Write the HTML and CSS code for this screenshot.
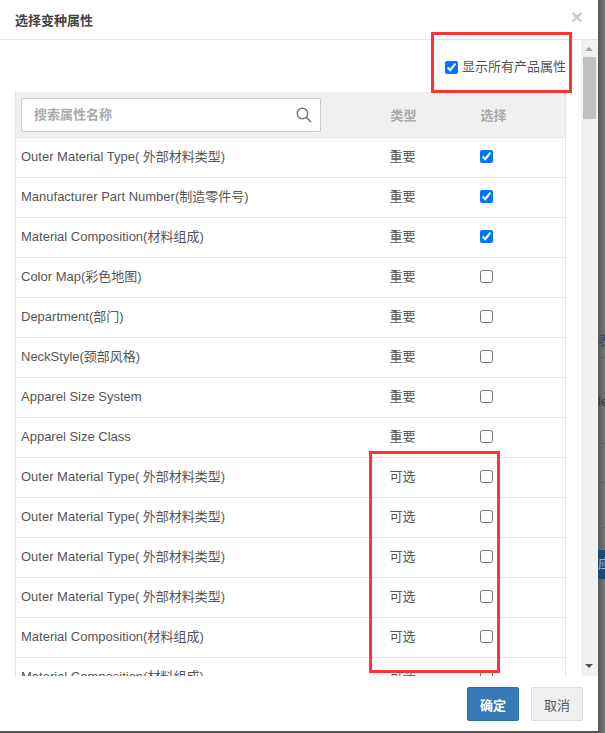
FILE: index.html
```html
<!DOCTYPE html>
<html lang="zh-CN">
<head>
    <meta charset="UTF-8">
    <title>选择变种属性</title>
    <link rel="stylesheet" href="styles.css">
</head>
<body>
    <div class="backdrop">
        <span class="bg-text bg-text-a">表</span>
        <span class="bg-text bg-text-b">le</span>
        <span class="bg-line bg-line-a"></span>
        <span class="bg-line bg-line-b"></span>
        <span class="bg-line bg-line-c"></span>
        <span class="bg-line bg-line-d"></span>
        <span class="bg-band"><span class="bg-band-text">应</span></span>
    </div>
    <div class="modal">
        <div class="modal-header">
            <h4 class="modal-title">选择变种属性</h4>
            <span class="close">×</span>
        </div>
        <div class="modal-body">
            <div class="scroll-content">
                <div class="show-all">
                    <input type="checkbox" checked>
                    <span>显示所有产品属性</span>
                </div>
                <table class="attr-table">
                    <thead>
                        <tr>
                            <th class="col-name">
                                <div class="search">
                                    <input type="text" placeholder="搜索属性名称">
                                    <svg width="18" height="18" viewBox="0 0 18 18" fill="none" stroke="#777" stroke-width="1.5">
                                        <circle cx="7.5" cy="7.5" r="5.2"/>
                                        <path d="M11.4 11.4 L16 16"/>
                                    </svg>
                                </div>
                            </th>
                            <th class="col-type">类型</th>
                            <th class="col-check">选择</th>
                        </tr>
                    </thead>
                    <tbody>
                        <tr><td>Outer Material Type( 外部材料类型)</td><td>重要</td><td><input type="checkbox" checked></td></tr>
                        <tr><td>Manufacturer Part Number(制造零件号)</td><td>重要</td><td><input type="checkbox" checked></td></tr>
                        <tr><td>Material Composition(材料组成)</td><td>重要</td><td><input type="checkbox" checked></td></tr>
                        <tr><td>Color Map(彩色地图)</td><td>重要</td><td><input type="checkbox"></td></tr>
                        <tr><td>Department(部门)</td><td>重要</td><td><input type="checkbox"></td></tr>
                        <tr><td>NeckStyle(颈部风格)</td><td>重要</td><td><input type="checkbox"></td></tr>
                        <tr><td>Apparel Size System</td><td>重要</td><td><input type="checkbox"></td></tr>
                        <tr><td>Apparel Size Class</td><td>重要</td><td><input type="checkbox"></td></tr>
                        <tr><td>Outer Material Type( 外部材料类型)</td><td>可选</td><td><input type="checkbox"></td></tr>
                        <tr><td>Outer Material Type( 外部材料类型)</td><td>可选</td><td><input type="checkbox"></td></tr>
                        <tr><td>Outer Material Type( 外部材料类型)</td><td>可选</td><td><input type="checkbox"></td></tr>
                        <tr><td>Outer Material Type( 外部材料类型)</td><td>可选</td><td><input type="checkbox"></td></tr>
                        <tr><td>Material Composition(材料组成)</td><td>可选</td><td><input type="checkbox"></td></tr>
                        <tr><td>Material Composition(材料组成)</td><td>可选</td><td><input type="checkbox"></td></tr>
                    </tbody>
                </table>
            </div>
            <div class="scrollbar">
                <span class="arrow arrow-up"></span>
                <div class="thumb"></div>
                <span class="arrow arrow-down"></span>
            </div>
        </div>
        <div class="modal-footer">
            <button class="btn btn-primary">确定</button>
            <button class="btn btn-default">取消</button>
        </div>
    </div>
    <div class="mark mark-top"></div>
    <div class="mark mark-list"></div>
</body>
</html>
```

FILE: styles.css
```css
* {
    box-sizing: border-box;
}

html, body {
    margin: 0;
    height: 733px;
    overflow: hidden;
}

body {
    position: relative;
    background: #555;
    font-family: "Liberation Sans", "Noto Sans CJK SC", sans-serif;
    font-size: 13px;
    color: #555;
}

.backdrop {
    position: absolute;
    top: 0;
    right: 0;
    bottom: 0;
    width: 7px;
    background: linear-gradient(to right, #585858, #767676);
    overflow: hidden;
}

.bg-text {
    position: absolute;
    left: 0;
    font-size: 13px;
    color: #333;
}

.bg-text-a {
    top: 330px;
    color: #2c4a6b;
}

.bg-text-b {
    top: 394px;
}

.bg-line {
    position: absolute;
    left: 0;
    right: 0;
    height: 1px;
    background: #5f5f5f;
}

.bg-line-a {
    top: 357px;
}

.bg-line-b {
    top: 443px;
}

.bg-line-c {
    top: 482px;
}

.bg-line-d {
    top: 527px;
}

.bg-band {
    position: absolute;
    left: 0;
    right: 0;
    top: 550px;
    height: 29px;
    background: #1f4a70;
}

.bg-band-text {
    color: #9db6cc;
    font-size: 13px;
    line-height: 28px;
}

.modal {
    position: relative;
    width: 598px;
    height: 731px;
    background: #fff;
    display: flex;
    flex-direction: column;
}

.modal-header {
    height: 40px;
    flex: none;
    padding: 0 15px;
    display: flex;
    align-items: center;
    justify-content: space-between;
    border-bottom: 1px solid #e5e5e5;
}

.modal-title {
    margin: 0;
    font-size: 13px;
    font-weight: 700;
    color: #444;
}

.close {
    font-size: 21px;
    font-weight: 700;
    line-height: 1;
    color: #ccc;
    margin: -6px 0 0 0;
}

.modal-body {
    height: 636px;
    flex: none;
    display: flex;
    overflow: hidden;
}

.scroll-content {
    flex: 1;
    min-width: 0;
    padding: 0 15px;
    overflow: hidden;
}

.show-all {
    height: 52px;
    padding-top: 2px;
    display: flex;
    align-items: center;
    justify-content: flex-end;
    gap: 4px;
    line-height: 14px;
}

.show-all input {
    margin: 0;
}

.attr-table {
    width: 551px;
    table-layout: fixed;
    border-collapse: collapse;
    border-left: 1px solid #e5e5e5;
    border-right: 1px solid #e5e5e5;
}

.attr-table th {
    height: 45px;
    background: #f0f0f0;
    color: #aaa;
    font-weight: 700;
    text-align: left;
    padding: 1px 0 0;
    border-bottom: 1px solid #e5e5e5;
}

.attr-table .col-type,
.attr-table .col-check {
    padding: 0 0 0 1px;
}

.attr-table td {
    height: 40px;
    padding: 0 0 1px;
    line-height: 20px;
    border-bottom: 1px solid #e5e5e5;
}

.attr-table td:first-child {
    padding-left: 5px;
}

.attr-table td:last-child {
    padding-bottom: 2px;
}

.col-name {
    width: 374px;
}

.col-type {
    width: 90px;
}

.attr-table input[type="checkbox"] {
    margin: 0;
    display: block;
}

.search {
    position: relative;
    margin-left: 5px;
    width: 300px;
    height: 34px;
}

.search input {
    width: 100%;
    height: 100%;
    border: 1px solid #ccc;
    border-radius: 2px;
    padding: 0 30px 0 12px;
    font-family: inherit;
    font-size: 13px;
    font-weight: 700;
    background: #fff;
}

.search input::placeholder {
    color: #aaa;
}

.search svg {
    position: absolute;
    right: 8px;
    top: 8px;
}

.attr-table input[type="checkbox"],
.show-all input {
    width: 13px;
    height: 13px;
}

.scrollbar {
    width: 17px;
    background: #f1f1f1;
    position: relative;
    flex: none;
}

.arrow {
    position: absolute;
    left: 4px;
    width: 0;
    height: 0;
    border-left: 4px solid transparent;
    border-right: 4px solid transparent;
}

.arrow-up {
    top: 7px;
    border-bottom: 4px solid #a3a3a3;
}

.arrow-down {
    bottom: 8px;
    border-top: 4px solid #505050;
}

.thumb {
    position: absolute;
    top: 17px;
    left: 2px;
    right: 2px;
    height: 62px;
    background: #c1c1c1;
}

.modal-footer {
    flex: 1;
    display: flex;
    justify-content: flex-end;
    align-items: flex-start;
    gap: 12px;
    padding: 11px 15px 0 0;
}

.btn {
    width: 52px;
    height: 34px;
    padding: 0;
    border-radius: 2px;
    font-family: inherit;
    font-size: 13px;
}

.btn-primary {
    background: #337ab7;
    border: 1px solid #2e6da4;
    color: #fff;
    font-weight: 700;
}

.btn-default {
    background: #f0f0f0;
    border: 1px solid #ddd;
    color: #555;
}

.mark {
    position: absolute;
    border: 3px solid #f33;
    pointer-events: none;
}

.mark-top {
    left: 431px;
    top: 32px;
    width: 141px;
    height: 61px;
}

.mark-list {
    left: 369px;
    top: 451px;
    width: 131px;
    height: 222px;
}
```
